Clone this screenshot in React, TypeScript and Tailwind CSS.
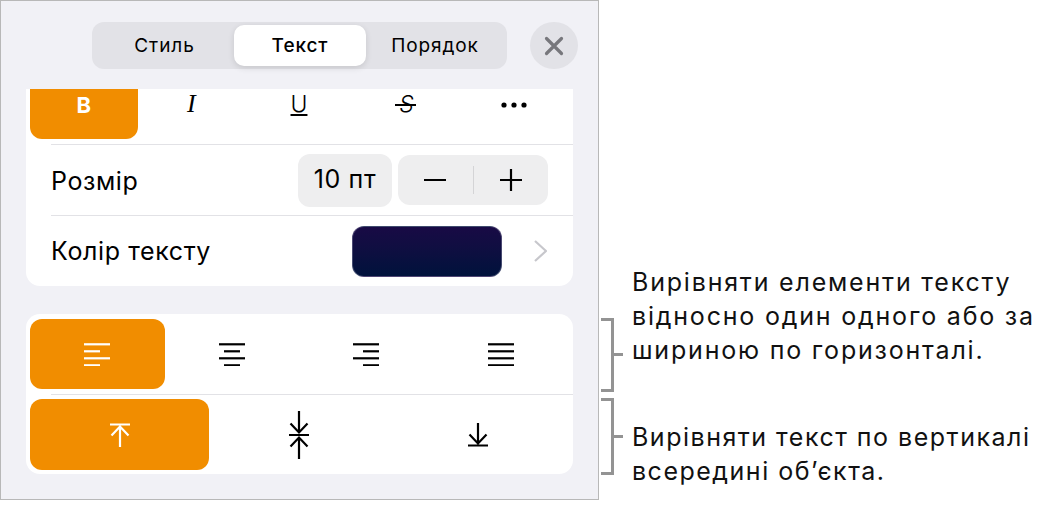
import React from 'react';

const LINES: Record<string, [number, number][]> = {
  left: [[0, 26], [0, 16], [0, 26], [0, 16]],
  center: [[0, 26], [5, 21], [0, 26], [5, 21]],
  right: [[0, 26], [10, 26], [0, 26], [10, 26]],
  justify: [[0, 26], [0, 26], [0, 26], [0, 26]],
};

const AlignIcon = ({ kind, color }: { kind: string; color: string }) => (
  <svg width="26" height="24" viewBox="0 0 26 24" fill="none" stroke={color} strokeWidth="2.2">
    {LINES[kind].map(([a, b], i) => (
      <line key={i} x1={a} x2={b} y1={2.3 + i * 7} y2={2.3 + i * 7} />
    ))}
  </svg>
);

const TopIcon = () => (
  <svg width="22" height="24" viewBox="0 0 22 24" fill="none" stroke="#fff" strokeWidth="2.2">
    <path d="M1 1.5h20M11 3v21M2.5 12.5L11 3.5l8.5 9" />
  </svg>
);

const MiddleIcon = () => (
  <svg width="22" height="48" viewBox="0 0 22 48" fill="none" stroke="#000" strokeWidth="2.2">
    <path d="M1 24h20M11 0v21.5M2.5 12.5L11 21.5l8.5-9M11 48V26.5M2.5 35.5L11 26.5l8.5 9" />
  </svg>
);

const BottomIcon = () => (
  <svg width="22" height="24" viewBox="0 0 22 24" fill="none" stroke="#000" strokeWidth="2.2">
    <path d="M1 22.5h20M11 21V0M2.5 11.5L11 20.5l8.5-9" />
  </svg>
);

const Bracket = ({ height, stemTop }: { height: string; stemTop: string }) => (
  <div className={`relative w-[13px] border-t-[3px] border-r-[3px] border-b-[3px] border-[#939393] ${height}`}>
    <div className={`absolute left-[10px] w-[12px] h-[3px] bg-[#939393] ${stemTop}`} />
  </div>
);

export default function App() {
  return (
    <div className="w-[1040px] h-[505px] bg-white flex items-start font-['Inter',sans-serif] text-black overflow-hidden">
      <div className="w-[599px] h-[500px] shrink-0 border border-[#b8b8b8] bg-[#f1f1f6] pt-[21px]">
        <div className="flex items-center pl-[91px] h-[47px]">
          <div className="w-[415px] h-[47px] rounded-[12px] bg-[#e2e2e7] flex items-center text-[19px] tracking-[0.9px] pl-[3px]">
            <span className="w-[139px] text-center pt-px">Стиль</span>
            <span className="w-[132px] h-[41px] pt-px rounded-[10px] bg-white shadow-[0_2px_6px_rgba(0,0,0,0.12)] flex items-center justify-center font-medium">Текст</span>
            <span className="w-[138px] text-center pt-px">Порядок</span>
          </div>
          <div className="ml-[23px] w-[48px] h-[47px] rounded-full bg-[#e2e2e7] flex items-center justify-center">
            <svg width="20" height="20" viewBox="0 0 20 20" fill="none" stroke="#77777c" strokeWidth="3.2" strokeLinecap="round">
              <path d="M2.5 2.5l15 15M17.5 2.5l-15 15" />
            </svg>
          </div>
        </div>

        <div className="mt-[20px] mx-[25px] bg-white rounded-b-[14px] overflow-hidden">
          <div className="h-[55px] pl-[4px] pr-[5px] grid grid-cols-5">
            <div className="h-[50px] rounded-b-[12px] bg-[#f18d00] text-white font-bold text-[22px] leading-none flex justify-center pt-[5px]">B</div>
            <div className="text-center font-['Liberation_Serif',serif] italic text-[26px] leading-[30px]">I</div>
            <div className="flex justify-center text-[23px] font-light leading-[26px] pt-[2px]"><span className="underline underline-offset-2 decoration-[1.5px]">U</span></div>
            <div className="flex justify-center text-[23px] font-light italic leading-[26px] pt-[2px]">
              <span className="relative">
                S
                <span className="absolute left-[-4px] top-[13px] w-[21px] h-[1.5px] bg-black" />
              </span>
            </div>
            <div className="flex justify-center pt-[13px]">
              <svg width="26" height="6" viewBox="0 0 26 6" fill="#000">
                <circle cx="3" cy="3" r="2.6" /><circle cx="13" cy="3" r="2.6" /><circle cx="23" cy="3" r="2.6" />
              </svg>
            </div>
          </div>
          <div className="h-px ml-[25px] bg-[#e2e2e6]" />
          <div className="h-[70px] flex items-center pl-[25px] pr-[25px] text-[25px] tracking-[0.6px]">
            <span className="flex-1 pt-[3px]">Розмір</span>
            <span className="w-[94px] h-[53px] rounded-[12px] bg-[#eeeeef] flex items-center justify-center">10 пт</span>
            <div className="ml-[6px] w-[150px] h-[50px] rounded-[12px] bg-[#eeeeef] flex items-center">
              <div className="flex-1 flex justify-center">
                <svg width="22" height="22" viewBox="0 0 22 22" stroke="#000" strokeWidth="2.2"><path d="M0 11h22" /></svg>
              </div>
              <div className="w-px h-[28px] bg-[#d4d4d6]" />
              <div className="flex-1 flex justify-center">
                <svg width="22" height="22" viewBox="0 0 22 22" stroke="#000" strokeWidth="2.2"><path d="M0 11h22M11 0v22" /></svg>
              </div>
            </div>
          </div>
          <div className="h-px ml-[25px] bg-[#e2e2e6]" />
          <div className="h-[70px] flex items-center pl-[25px] text-[25px] tracking-[0.6px]">
            <span className="flex-1 pt-[2px]">Колір тексту</span>
            <div className="w-[150px] h-[51px] rounded-[12px] bg-gradient-to-b from-[#180a45] to-[#00123c] border border-[#d0d0e0]/30" />
            <svg className="ml-[32px] mr-[26px]" width="13" height="22" viewBox="0 0 13 22" fill="none" stroke="#c7c7cc" strokeWidth="2.2">
              <path d="M1 1l11 10L1 21" />
            </svg>
          </div>
        </div>

        <div className="mt-[28px] mx-[25px] bg-white rounded-[14px] h-[160px] pt-[5px]">
          <div className="pl-[4px] pr-[5px] grid grid-cols-4 h-[70px]">
            <div className="rounded-[12px] bg-[#f18d00] flex items-center justify-center"><AlignIcon kind="left" color="#fff" /></div>
            <div className="flex items-center justify-center"><AlignIcon kind="center" color="#000" /></div>
            <div className="flex items-center justify-center"><AlignIcon kind="right" color="#000" /></div>
            <div className="flex items-center justify-center"><AlignIcon kind="justify" color="#000" /></div>
          </div>
          <div className="h-px ml-[25px] mt-[5px] bg-[#e2e2e6]" />
          <div className="pl-[4px] pr-[5px] mt-[4px] grid grid-cols-3 h-[71px]">
            <div className="rounded-[12px] bg-[#f18d00] flex items-center justify-center"><TopIcon /></div>
            <div className="flex items-center justify-center"><MiddleIcon /></div>
            <div className="flex items-center justify-center"><BottomIcon /></div>
          </div>
        </div>
      </div>

      <div className="flex-1 pl-[2px] pt-[265px] text-[25px] leading-[34px] text-[#111]">
        <div className="flex h-[133px] tracking-[1.8px]">
          <div className="pt-[53px]"><Bracket height="h-[74px]" stemTop="top-[32px]" /></div>
          <div className="ml-[18px] whitespace-nowrap">
            <div>Вирівняти елементи тексту</div>
            <div>відносно один одного або за</div>
            <div>шириною по горизонталі.</div>
          </div>
        </div>
        <div className="flex tracking-[1.5px]">
          <div><Bracket height="h-[77px]" stemTop="top-[34px]" /></div>
          <div className="ml-[18px] pt-[22px] whitespace-nowrap">
            <div>Вирівняти текст по вертикалі</div>
            <div>всередині обʼєкта.</div>
          </div>
        </div>
      </div>
    </div>
  );
}
